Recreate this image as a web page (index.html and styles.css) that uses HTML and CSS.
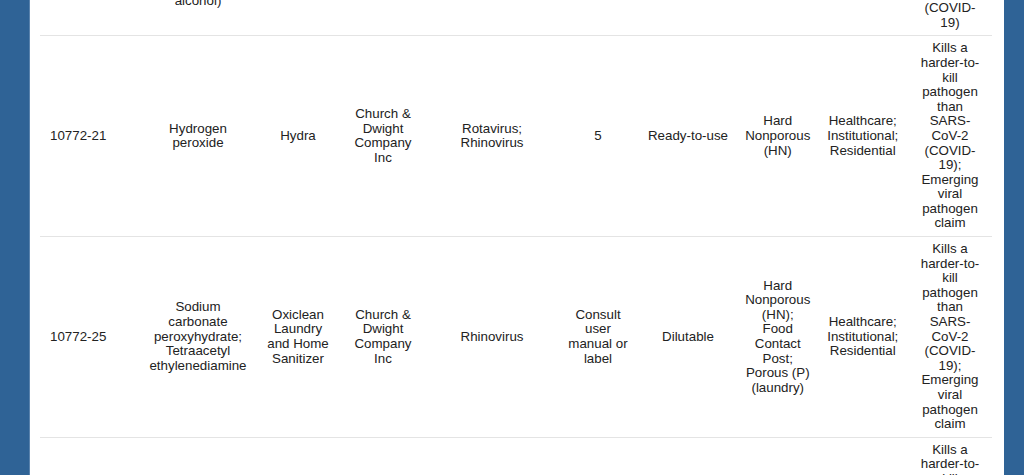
FILE: index.html
```html
<!DOCTYPE html>
<html lang="en">
<head>
<meta charset="utf-8">
<title>Disinfectants list</title>
<link rel="stylesheet" href="styles.css">
</head>
<body>
<div class="page">
  <div class="content">
    <table class="products">
      <colgroup>
        <col class="c-reg">
        <col class="c-ing">
        <col class="c-name">
        <col class="c-co">
        <col class="c-path">
        <col class="c-time">
        <col class="c-type">
        <col class="c-surf">
        <col class="c-use">
        <col class="c-claim">
      </colgroup>
      <tbody>
        <tr>
          <td class="reg">10772-17</td>
          <td>Didecyl dimethyl ammonium chloride; Isopropanol (Isopropyl alcohol)</td>
          <td>Arm &amp; Hammer</td>
          <td>Church &amp; Dwight Company Inc</td>
          <td>Norovirus</td>
          <td>2</td>
          <td>Ready-to-use</td>
          <td>Hard Nonporous (HN)</td>
          <td>Residential</td>
          <td class="claim">Kills a harder-to-kill pathogen than SARS-CoV-2 (COVID-19)</td>
        </tr>
        <tr>
          <td class="reg">10772-21</td>
          <td>Hydrogen peroxide</td>
          <td>Hydra</td>
          <td>Church &amp; Dwight Company Inc</td>
          <td>Rotavirus; Rhinovirus</td>
          <td>5</td>
          <td>Ready-to-use</td>
          <td>Hard Nonporous (HN)</td>
          <td>Healthcare; Institutional; Residential</td>
          <td class="claim">Kills a harder-to-kill pathogen than SARS-CoV-2 (COVID-19); Emerging viral pathogen claim</td>
        </tr>
        <tr>
          <td class="reg">10772-25</td>
          <td>Sodium carbonate peroxyhydrate; Tetraacetyl ethylenediamine</td>
          <td>Oxiclean Laundry and Home Sanitizer</td>
          <td>Church &amp; Dwight Company Inc</td>
          <td>Rhinovirus</td>
          <td>Consult user manual or label</td>
          <td>Dilutable</td>
          <td>Hard Nonporous (HN); Food Contact Post; Porous (P) (laundry)</td>
          <td>Healthcare; Institutional; Residential</td>
          <td class="claim">Kills a harder-to-kill pathogen than SARS-CoV-2 (COVID-19); Emerging viral pathogen claim</td>
        </tr>
        <tr>
          <td class="reg">10772-27</td>
          <td>Hydrogen peroxide</td>
          <td>Hydra Max</td>
          <td>Church &amp; Dwight Company Inc</td>
          <td>Rhinovirus</td>
          <td>3</td>
          <td>Ready-to-use</td>
          <td>Hard Nonporous (HN)</td>
          <td>Healthcare; Institutional; Residential</td>
          <td class="claim">Kills a harder-to-kill pathogen than SARS-CoV-2 (COVID-19); Emerging viral pathogen claim</td>
        </tr>
      </tbody>
    </table>
  </div>
</div>
</body>
</html>
```
FILE: styles.css
```css
html, body {
  margin: 0;
  padding: 0;
}

body {
  background: #2f6396;
  font-family: "Liberation Sans", Arial, sans-serif;
  font-size: 13.33px;
  line-height: 14.6px;
  color: #222;
  overflow: hidden;
}

.page {
  margin-left: 30px;
  width: 974px;
  min-height: 475px;
  background: #fff;
  display: flow-root;
  overflow: hidden;
  box-shadow: -1px 0 0 #5a83ad;
}

.content {
  padding-left: 10px;
}

.products {
  margin-top: -106px;
  width: 952px;
  table-layout: fixed;
  border-collapse: collapse;
}

.c-reg { width: 100px; }
.c-ing { width: 116px; }
.c-name { width: 84px; }
.c-co { width: 86px; }
.c-path { width: 132px; }
.c-time { width: 80px; }
.c-type { width: 100px; }
.c-surf { width: 79.5px; }
.c-use { width: 90.5px; }
.c-claim { width: 84px; }

.products td {
  padding: 5px 7px;
  text-align: center;
  vertical-align: middle;
  border-bottom: 1px solid #e4e4e4;
}

.products td.reg {
  text-align: left;
  padding-left: 10px;
}

.products td.claim {
  padding-left: 9px;
  padding-right: 9px;
}
```
